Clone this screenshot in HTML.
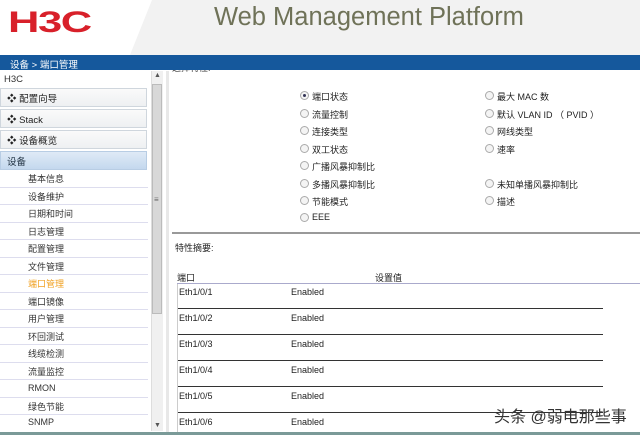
<!DOCTYPE html><html><head><meta charset="utf-8"><style>
*{margin:0;padding:0;box-sizing:border-box}
body{width:640px;height:435px;overflow:hidden;background:#fff;font-family:"Liberation Sans","Noto Sans CJK SC",sans-serif;font-size:9px;color:#222;position:relative}
.a{position:absolute;white-space:nowrap}
.rad{position:absolute;width:9px;height:9px;border:1px solid #aaa;border-radius:50%;background:#f4f4f4}
.rad.on::after{content:"";position:absolute;left:2px;top:2px;width:3px;height:3px;border-radius:50%;background:#335}
.box{position:absolute;left:0;width:147px;height:19px;border:1px solid #cfd6dd;background:linear-gradient(#fafafa,#eef0f2);font-size:9.5px;padding:2px 0 0 6px;color:#222}
.sub{position:absolute;left:28px;font-size:9px;color:#333}
.sl{position:absolute;left:0;width:148px;height:1px;background:#dde}
</style></head><body>
<div class="a" style="left:172px;top:61px;font-size:9px;color:#333">选择特性:</div>
<div class="a" style="left:0;top:0;width:640px;height:55px;background:#f2f2f2"></div>
<div class="a" style="left:0;top:0;width:130px;height:55px;background:#fff;"></div>
<div class="a" style="left:130px;top:0;width:0;height:0;border-top:55px solid #fff;border-right:22px solid transparent"></div>
<div class="a" style="left:8px;top:6px;font-size:30px;font-weight:bold;color:#d8202a;letter-spacing:-1px;transform:scaleX(1.45);transform-origin:left;font-family:'Liberation Sans',sans-serif">H3C</div>
<div class="a" style="left:214px;top:3px;font-size:25.5px;color:#6f7258">Web Management Platform</div>
<div class="a" style="left:0;top:55px;width:640px;height:15px;background:#15589c"></div>
<div class="a" style="left:10px;top:57px;color:#fff;font-size:9.5px">设备 &gt; 端口管理</div>
<div class="a" style="left:4px;top:74px;font-size:9.5px;color:#333">H3C</div>
<div class="box" style="top:88px">❖ 配置向导</div>
<div class="box" style="top:109px">❖ Stack</div>
<div class="box" style="top:130px">❖ 设备概览</div>
<div class="box" style="top:151px;background:linear-gradient(#dfeaf6,#c4d8ee);border-color:#b8cde4;color:#234">设备</div>
<div class="sub" style="top:172px">基本信息</div><div class="sl" style="top:187px"></div>
<div class="sub" style="top:190px">设备维护</div><div class="sl" style="top:204px"></div>
<div class="sub" style="top:207px">日期和时间</div><div class="sl" style="top:222px"></div>
<div class="sub" style="top:225px">日志管理</div><div class="sl" style="top:239px"></div>
<div class="sub" style="top:242px">配置管理</div><div class="sl" style="top:257px"></div>
<div class="sub" style="top:260px">文件管理</div><div class="sl" style="top:274px"></div>
<div class="sub" style="top:277px;color:#f0a020">端口管理</div><div class="sl" style="top:292px"></div>
<div class="sub" style="top:295px">端口镜像</div><div class="sl" style="top:309px"></div>
<div class="sub" style="top:312px">用户管理</div><div class="sl" style="top:327px"></div>
<div class="sub" style="top:330px">环回测试</div><div class="sl" style="top:344px"></div>
<div class="sub" style="top:347px">线缆检测</div><div class="sl" style="top:362px"></div>
<div class="sub" style="top:365px">流量监控</div><div class="sl" style="top:379px"></div>
<div class="sub" style="top:383px">RMON</div><div class="sl" style="top:397px"></div>
<div class="sub" style="top:400px">绿色节能</div><div class="sl" style="top:414px"></div>
<div class="sub" style="top:417px">SNMP</div>
<div class="a" style="left:151px;top:71px;width:12px;height:360px;background:#f0f0f0;border-left:1px solid #ddd"></div>
<div class="a" style="left:152px;top:84px;width:10px;height:230px;background:#d8d8d8;border:1px solid #bbb"></div>
<div class="a" style="left:154px;top:72px;font-size:7px;color:#555">▲</div>
<div class="a" style="left:154px;top:195px;font-size:8px;color:#666">≡</div>
<div class="a" style="left:154px;top:422px;font-size:7px;color:#555">▼</div>
<div class="a" style="left:166px;top:71px;width:3px;height:362px;background:#e8e8e8"></div>
<div class="a" style="left:172px;top:232px;width:468px;height:2px;background:#999"></div>
<div class="rad on" style="left:300px;top:91px"></div><div class="a" style="left:312px;top:90px">端口状态</div>
<div class="rad" style="left:300px;top:109px"></div><div class="a" style="left:312px;top:108px">流量控制</div>
<div class="rad" style="left:300px;top:126px"></div><div class="a" style="left:312px;top:125px">连接类型</div>
<div class="rad" style="left:300px;top:144px"></div><div class="a" style="left:312px;top:143px">双工状态</div>
<div class="rad" style="left:300px;top:161px"></div><div class="a" style="left:312px;top:160px">广播风暴抑制比</div>
<div class="rad" style="left:300px;top:179px"></div><div class="a" style="left:312px;top:178px">多播风暴抑制比</div>
<div class="rad" style="left:300px;top:196px"></div><div class="a" style="left:312px;top:195px">节能模式</div>
<div class="rad" style="left:300px;top:213px"></div><div class="a" style="left:312px;top:212px">EEE</div>
<div class="rad" style="left:485px;top:91px"></div><div class="a" style="left:497px;top:90px">最大 MAC 数</div>
<div class="rad" style="left:485px;top:109px"></div><div class="a" style="left:497px;top:108px">默认 VLAN ID （ PVID ）</div>
<div class="rad" style="left:485px;top:126px"></div><div class="a" style="left:497px;top:125px">网线类型</div>
<div class="rad" style="left:485px;top:144px"></div><div class="a" style="left:497px;top:143px">速率</div>
<div class="rad" style="left:485px;top:179px"></div><div class="a" style="left:497px;top:178px">未知单播风暴抑制比</div>
<div class="rad" style="left:485px;top:196px"></div><div class="a" style="left:497px;top:195px">描述</div>
<div class="a" style="left:175px;top:241px">特性摘要:</div>
<div class="a" style="left:177px;top:271px">端口</div>
<div class="a" style="left:375px;top:271px">设置值</div>
<div class="a" style="left:177px;top:283px;width:463px;height:1px;background:#aac"></div>
<div class="a" style="left:177px;top:284px;width:1px;height:150px;background:#ccc"></div>
<div class="a" style="left:179px;top:287px">Eth1/0/1</div><div class="a" style="left:291px;top:287px">Enabled</div>
<div class="a" style="left:178px;top:308px;width:425px;height:1px;background:#333"></div>
<div class="a" style="left:179px;top:313px">Eth1/0/2</div><div class="a" style="left:291px;top:313px">Enabled</div>
<div class="a" style="left:178px;top:334px;width:425px;height:1px;background:#333"></div>
<div class="a" style="left:179px;top:339px">Eth1/0/3</div><div class="a" style="left:291px;top:339px">Enabled</div>
<div class="a" style="left:178px;top:360px;width:425px;height:1px;background:#333"></div>
<div class="a" style="left:179px;top:365px">Eth1/0/4</div><div class="a" style="left:291px;top:365px">Enabled</div>
<div class="a" style="left:178px;top:386px;width:425px;height:1px;background:#333"></div>
<div class="a" style="left:179px;top:391px">Eth1/0/5</div><div class="a" style="left:291px;top:391px">Enabled</div>
<div class="a" style="left:178px;top:412px;width:425px;height:1px;background:#333"></div>
<div class="a" style="left:179px;top:417px">Eth1/0/6</div><div class="a" style="left:291px;top:417px">Enabled</div>
<div class="a" style="left:494px;top:403px;font-size:16px;color:#333">头条 @弱电那些事</div>
<div class="a" style="left:0;top:432px;width:640px;height:3px;background:#7a9a98"></div>
</body></html>
